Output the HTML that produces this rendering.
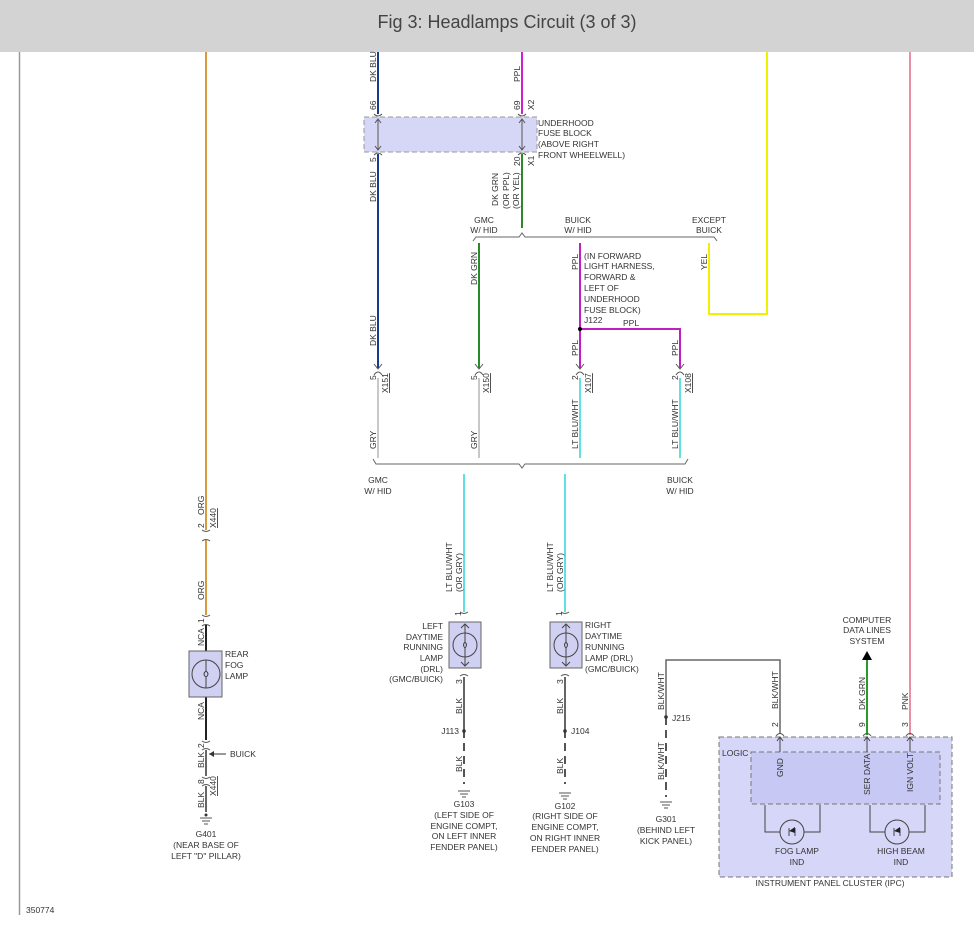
<!DOCTYPE html>
<html><head><meta charset="utf-8"><style>
html,body{margin:0;padding:0;background:#fff;width:974px;height:936px;overflow:hidden}
svg{display:block}
text{font-family:"Liberation Sans",sans-serif;font-size:8.5px;fill:#333}
.t{font-size:18px;fill:#444}
</style></head><body>
<svg width="974" height="936" viewBox="0 0 974 936" xmlns="http://www.w3.org/2000/svg">
<rect x="0" y="0" width="974" height="52" fill="#d3d3d3"/>
<text class="t" x="507" y="28" text-anchor="middle">Fig 3: Headlamps Circuit (3 of 3)</text>
<line x1="19.5" y1="52" x2="19.5" y2="915" stroke="#999" stroke-width="1.5"/>
<text x="26" y="913">350774</text>

<!-- fuse block -->
<rect x="364" y="117" width="173" height="35" fill="#d6d6f6" stroke="#999" stroke-dasharray="5,3"/>
<line x1="378" y1="120" x2="378" y2="149" stroke="#555"/><line x1="522" y1="120" x2="522" y2="149" stroke="#555"/>
<path d="M375,123 L378,119 L381,123 M375,146 L378,150 L381,146 M519,123 L522,119 L525,123 M519,146 L522,150 L525,146" fill="none" stroke="#555"/>
<text x="538" y="126">UNDERHOOD</text><text x="538" y="136">FUSE BLOCK</text><text x="538" y="147">(ABOVE RIGHT</text><text x="538" y="158">FRONT WHEELWELL)</text>

<!-- wires -->
<g fill="none" stroke-width="2">
<path d="M378,52 V114 M378,154 V368" stroke="#1a3a8a"/>
<path d="M522,52 V114" stroke="#d020d0"/>
<path d="M522,154 V228" stroke="#2a8a2a"/>
<path d="M479,243 V368" stroke="#2a8a2a"/>
<path d="M580,243 V368 M580,329 H680 V368" stroke="#c020c0"/>
<path d="M709,243 V314 H767 V52" stroke="#f0f000"/>
<path d="M910,52 V735" stroke="#e890a8"/>
<path d="M378,378 V458 M479,378 V458" stroke="#c8c8c8"/>
<path d="M580,378 V458 M680,378 V458 M464,474 V612 M565,474 V612" stroke="#60e0e0"/>
<path d="M206,52 V530 M206,540 V615" stroke="#d89a40"/>
<path d="M206,625 V651 M206,697 V740" stroke="#222"/>
<path d="M206,750 V776 M206,786 V812" stroke="#666"/>
<path d="M464,677 V730 M565,677 V730" stroke="#666"/>
<path d="M464,730 V784 M565,730 V784 M666,717 V797" stroke="#555" stroke-dasharray="8,5"/>
<path d="M666,717 V660 H780 V734" stroke="#666" stroke-width="1.5"/>
<path d="M867,660 V735" stroke="#2a9a2a"/>
</g>
<circle cx="580" cy="329" r="2" fill="#000"/>
<!-- brackets -->
<path d="M473,241 L476,237 H519 L522,233 L525,237 H714 L717,241" fill="none" stroke="#666"/>
<path d="M373,459 L376,464 H519 L522,468 L525,464 H685 L688,459" fill="none" stroke="#666"/>
<!-- connectors -->
<g fill="none" stroke="#555">
<path d="M374,364 L378,369 L382,364 M374,375 Q378,369 382,375"/>
<path d="M475,364 L479,369 L483,364 M475,375 Q479,369 483,375"/>
<path d="M576,364 L580,369 L584,364 M576,375 Q580,369 584,375"/>
<path d="M676,364 L680,369 L684,364 M676,375 Q680,369 684,375"/>
<path d="M374,114 Q378,118 382,114 M374,155 Q378,151 382,155 M518,114 Q522,118 526,114 M518,155 Q522,151 526,155"/>
<path d="M202,530 Q206,533 210,530 M202,541 Q206,538 210,541"/>
<path d="M202,615 Q206,618 210,615 M202,626 Q206,623 210,626"/>
<path d="M202,741 Q206,744 210,741 M202,750 Q206,747 210,750"/>
<path d="M202,777 Q206,780 210,777 M202,786 Q206,783 210,786"/>
<path d="M460,612 Q464,615 468,612 M460,676 Q464,673 468,676"/>
<path d="M561,612 Q565,615 569,612 M561,676 Q565,673 569,676"/>
<path d="M776,736 Q780,731 784,736 M863,736 Q867,731 871,736 M906,736 Q910,731 914,736"/>
</g>
<text transform="translate(376,82) rotate(-90)">DK BLU</text>
<text transform="translate(376,110) rotate(-90)">66</text>
<text transform="translate(376,162) rotate(-90)">5</text>
<text transform="translate(376,202) rotate(-90)">DK BLU</text>
<text transform="translate(376,346) rotate(-90)">DK BLU</text>
<text transform="translate(376,380) rotate(-90)">5</text>
<text transform="translate(388,393) rotate(-90)" text-decoration="underline">X151</text>
<text transform="translate(376,449) rotate(-90)">GRY</text>
<text transform="translate(520,82) rotate(-90)">PPL</text>
<text transform="translate(520,110) rotate(-90)">69</text>
<text transform="translate(534,110) rotate(-90)">X2</text>
<text transform="translate(520,166) rotate(-90)">20</text>
<text transform="translate(534,166) rotate(-90)">X1</text>
<text transform="translate(498,206) rotate(-90)">DK GRN</text>
<text transform="translate(509,209) rotate(-90)">(OR PPL)</text>
<text transform="translate(519,209) rotate(-90)">(OR YEL)</text>
<text x="484" y="223" text-anchor="middle">GMC</text><text x="484" y="233" text-anchor="middle">W/ HID</text>
<text x="578" y="223" text-anchor="middle">BUICK</text><text x="578" y="233" text-anchor="middle">W/ HID</text>
<text x="709" y="223" text-anchor="middle">EXCEPT</text><text x="709" y="233" text-anchor="middle">BUICK</text>
<text transform="translate(477,285) rotate(-90)">DK GRN</text>
<text transform="translate(477,380) rotate(-90)">5</text>
<text transform="translate(489,393) rotate(-90)" text-decoration="underline">X150</text>
<text transform="translate(477,449) rotate(-90)">GRY</text>
<text transform="translate(578,270) rotate(-90)">PPL</text>
<text x="584" y="259">(IN FORWARD</text><text x="584" y="269">LIGHT HARNESS,</text><text x="584" y="280">FORWARD &amp;</text><text x="584" y="291">LEFT OF</text><text x="584" y="302">UNDERHOOD</text><text x="584" y="313">FUSE BLOCK)</text><text x="584" y="323">J122</text>
<text x="623" y="326">PPL</text>
<text transform="translate(578,356) rotate(-90)">PPL</text>
<text transform="translate(678,356) rotate(-90)">PPL</text>
<text transform="translate(707,270) rotate(-90)">YEL</text>
<text transform="translate(578,380) rotate(-90)">2</text>
<text transform="translate(591,393) rotate(-90)" text-decoration="underline">X107</text>
<text transform="translate(678,380) rotate(-90)">2</text>
<text transform="translate(691,393) rotate(-90)" text-decoration="underline">X108</text>
<text transform="translate(578,449) rotate(-90)">LT BLU/WHT</text>
<text transform="translate(678,449) rotate(-90)">LT BLU/WHT</text>
<text x="378" y="483" text-anchor="middle">GMC</text><text x="378" y="494" text-anchor="middle">W/ HID</text>
<text x="680" y="483" text-anchor="middle">BUICK</text><text x="680" y="494" text-anchor="middle">W/ HID</text>

<!-- rear fog -->
<text transform="translate(204,515) rotate(-90)">ORG</text>
<text transform="translate(204,528) rotate(-90)">2</text>
<text transform="translate(216,528) rotate(-90)" text-decoration="underline">X440</text>
<text transform="translate(204,600) rotate(-90)">ORG</text>
<text transform="translate(204,623) rotate(-90)">1</text>
<text transform="translate(204,646) rotate(-90)">NCA</text>
<rect x="189" y="651" width="33" height="46" fill="#d0d0f2" stroke="#666"/>
<circle cx="206" cy="674" r="14" fill="none" stroke="#444"/>
<path d="M206,660 V671 M206,677 V688 M206,671 Q210,674 206,677 Q202,674 206,671" fill="none" stroke="#444"/>
<text x="225" y="657">REAR</text><text x="225" y="668">FOG</text><text x="225" y="679">LAMP</text>
<text transform="translate(204,720) rotate(-90)">NCA</text>
<text transform="translate(204,748) rotate(-90)">2</text>
<text transform="translate(204,768) rotate(-90)">BLK</text>
<path d="M209,754 H226" stroke="#333"/><path d="M209,754 L214,751 L214,757 Z" fill="#333"/>
<text x="230" y="757">BUICK</text>
<text transform="translate(204,784) rotate(-90)">8</text>
<text transform="translate(216,796) rotate(-90)" text-decoration="underline">X440</text>
<text transform="translate(204,808) rotate(-90)">BLK</text>
<g stroke="#555" fill="none"><path d="M200,818 H212 M202,821 H210 M204,824 H208"/></g><circle cx="206" cy="815" r="1.5" fill="#333"/>
<text x="206" y="837" text-anchor="middle">G401</text><text x="206" y="848" text-anchor="middle">(NEAR BASE OF</text><text x="206" y="859" text-anchor="middle">LEFT "D" PILLAR)</text>

<!-- DRLs -->
<text transform="translate(452,592) rotate(-90)">LT BLU/WHT</text><text transform="translate(462,592) rotate(-90)">(OR GRY)</text>
<text transform="translate(553,592) rotate(-90)">LT BLU/WHT</text><text transform="translate(563,592) rotate(-90)">(OR GRY)</text>
<text transform="translate(461,616) rotate(-90)">1</text><text transform="translate(562,616) rotate(-90)">1</text>
<rect x="449" y="622" width="32" height="46" fill="#d0d0f2" stroke="#666"/>
<rect x="550" y="622" width="32" height="46" fill="#d0d0f2" stroke="#666"/>
<g fill="none" stroke="#444">
<circle cx="465" cy="645" r="12"/><path d="M465,624 V642 M465,648 V666 M461,628 L465,624 L469,628 M461,662 L465,666 L469,662 M465,642 Q468,645 465,648 Q462,645 465,642"/>
<circle cx="566" cy="645" r="12"/><path d="M566,624 V642 M566,648 V666 M562,628 L566,624 L570,628 M562,662 L566,666 L570,662 M566,642 Q569,645 566,648 Q563,645 566,642"/>
</g>
<g text-anchor="end"><text x="443" y="629">LEFT</text><text x="443" y="640">DAYTIME</text><text x="443" y="650">RUNNING</text><text x="443" y="661">LAMP</text><text x="443" y="672">(DRL)</text><text x="443" y="682">(GMC/BUICK)</text></g>
<text x="585" y="628">RIGHT</text><text x="585" y="639">DAYTIME</text><text x="585" y="650">RUNNING</text><text x="585" y="661">LAMP (DRL)</text><text x="585" y="672">(GMC/BUICK)</text>
<text transform="translate(462,684) rotate(-90)">3</text><text transform="translate(563,684) rotate(-90)">3</text>
<text transform="translate(462,714) rotate(-90)">BLK</text><text transform="translate(563,714) rotate(-90)">BLK</text>
<circle cx="464" cy="731" r="1.8" fill="#333"/><circle cx="565" cy="731" r="1.8" fill="#333"/>
<text x="459" y="734" text-anchor="end">J113</text><text x="571" y="734">J104</text>
<text transform="translate(462,772) rotate(-90)">BLK</text><text transform="translate(563,774) rotate(-90)">BLK</text>
<g stroke="#555" fill="none"><path d="M458,791 H470 M460,794 H468 M462,797 H466 M559,793 H571 M561,796 H569 M563,799 H567 M660,802 H672 M662,805 H670 M664,808 H668"/></g>
<text x="464" y="807" text-anchor="middle">G103</text><text x="464" y="818" text-anchor="middle">(LEFT SIDE OF</text><text x="464" y="829" text-anchor="middle">ENGINE COMPT,</text><text x="464" y="839" text-anchor="middle">ON LEFT INNER</text><text x="464" y="850" text-anchor="middle">FENDER PANEL)</text>
<text x="565" y="809" text-anchor="middle">G102</text><text x="565" y="819" text-anchor="middle">(RIGHT SIDE OF</text><text x="565" y="830" text-anchor="middle">ENGINE COMPT,</text><text x="565" y="841" text-anchor="middle">ON RIGHT INNER</text><text x="565" y="852" text-anchor="middle">FENDER PANEL)</text>

<!-- BLK/WHT -->
<text transform="translate(664,710) rotate(-90)">BLK/WHT</text>
<circle cx="666" cy="717" r="1.8" fill="#333"/><text x="672" y="721">J215</text>
<text transform="translate(664,780) rotate(-90)">BLK/WHT</text>
<text x="666" y="822" text-anchor="middle">G301</text><text x="666" y="833" text-anchor="middle">(BEHIND LEFT</text><text x="666" y="844" text-anchor="middle">KICK PANEL)</text>
<text transform="translate(778,709) rotate(-90)">BLK/WHT</text>
<text transform="translate(778,727) rotate(-90)">2</text>

<!-- IPC -->
<text x="867" y="623" text-anchor="middle">COMPUTER</text><text x="867" y="633" text-anchor="middle">DATA LINES</text><text x="867" y="644" text-anchor="middle">SYSTEM</text>
<path d="M867,651 L862,660 H872 Z" fill="#000"/>
<text transform="translate(865,710) rotate(-90)">DK GRN</text>
<text transform="translate(865,727) rotate(-90)">9</text>
<text transform="translate(908,710) rotate(-90)">PNK</text>
<text transform="translate(908,727) rotate(-90)">3</text>
<rect x="719" y="737" width="233" height="140" fill="#d6d6f8" stroke="#777" stroke-dasharray="5,3"/>
<rect x="751" y="752" width="189" height="52" fill="#c8c8f4" stroke="#777" stroke-dasharray="5,3"/>
<text x="722" y="756">LOGIC</text>
<g stroke="#444" fill="none">
<path d="M780,737 V752 M867,737 V752 M910,737 V752 M777,741 L780,737 L783,741 M864,741 L867,737 L870,741 M907,741 L910,737 L913,741"/>
<path d="M765,805 V832 H780 M804,832 H820 V805 M870,805 V832 H885 M909,832 H925 V805"/>
<circle cx="792" cy="832" r="12"/><circle cx="897" cy="832" r="12"/>
<path d="M789,828 V836 M795,828 V836 M894,828 V836 M900,828 V836"/>
</g>
<path d="M789,831 L795,827 L795,833 Z M894,831 L900,827 L900,833 Z" fill="#222"/>
<text transform="translate(783,777) rotate(-90)">GND</text>
<text transform="translate(870,795) rotate(-90)">SER DATA</text>
<text transform="translate(913,792) rotate(-90)">IGN VOLT</text>
<text x="797" y="854" text-anchor="middle">FOG LAMP</text><text x="797" y="865" text-anchor="middle">IND</text>
<text x="901" y="854" text-anchor="middle">HIGH BEAM</text><text x="901" y="865" text-anchor="middle">IND</text>
<text x="830" y="886" text-anchor="middle">INSTRUMENT PANEL CLUSTER (IPC)</text>
</svg>
</body></html>
